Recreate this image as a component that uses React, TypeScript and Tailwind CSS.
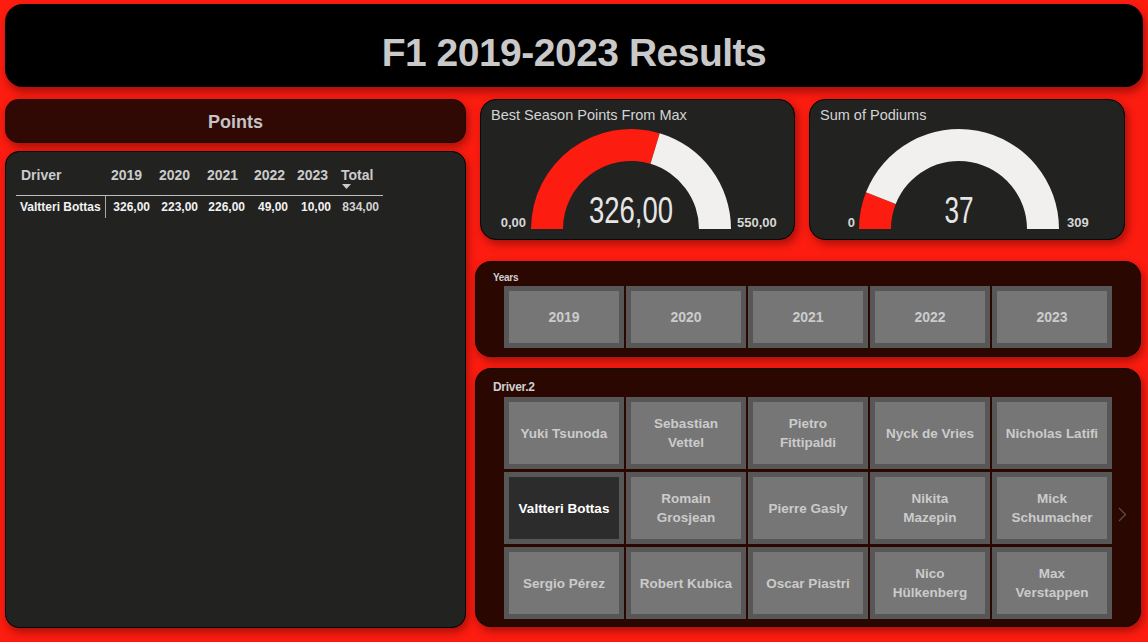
import React from "react";

const FONT = { fontFamily: '"Liberation Sans", Arial, sans-serif' };

function arcPath(cx: number, cy: number, R: number, r: number, a0: number, a1: number) {
  const p = (rad: number, ang: number) => [cx + rad * Math.cos(ang), cy - rad * Math.sin(ang)];
  const [x0, y0] = p(R, a0);
  const [x1, y1] = p(R, a1);
  const [x2, y2] = p(r, a1);
  const [x3, y3] = p(r, a0);
  return `M ${x0} ${y0} A ${R} ${R} 0 0 1 ${x1} ${y1} L ${x2} ${y2} A ${r} ${r} 0 0 0 ${x3} ${y3} Z`;
}

function Gauge({
  title,
  value,
  valueWidth,
  min,
  max,
  frac,
  cx,
  maxX,
  width,
}: {
  title: string;
  value: string;
  valueWidth: number;
  min: string;
  max: string;
  frac: number;
  cx: number;
  maxX: number;
  width: number;
}) {
  const cy = 129;
  const R = 100;
  const r = 68;
  const split = Math.PI * (1 - frac);
  return (
    <div
      className="h-[141px] rounded-[16px] bg-[#222220] border border-black shadow-[3px_4px_8px_rgba(60,0,0,0.45)] overflow-hidden"
      style={{ width }}
    >
      <svg width={width} height={141} viewBox={`0 0 ${width} 141`}>
        <text x={10} y={20} fontSize={14.5} fill="#d4d4d4" style={FONT}>
          {title}
        </text>
        <path d={arcPath(cx, cy, R, r, Math.PI, split)} fill="#fd1c10" />
        <path d={arcPath(cx, cy, R, r, split, 0)} fill="#f1f0ee" />
        <text
          x={cx}
          y={123}
          fontSize={37}
          fill="#e6e6e6"
          textAnchor="middle"
          textLength={valueWidth}
          lengthAdjust="spacingAndGlyphs"
          style={FONT}
        >
          {value}
        </text>
        <text x={45} y={127} fontSize={13} fontWeight={700} fill="#d6d6d6" textAnchor="end" style={FONT}>
          {min}
        </text>
        <text x={maxX} y={127} fontSize={13} fontWeight={700} fill="#d6d6d6" style={FONT}>
          {max}
        </text>
      </svg>
    </div>
  );
}

function Cell({ label, selected }: { label: string; selected?: boolean }) {
  return (
    <div className="w-[120px] h-[72px] bg-[#575757] p-[5px]">
      <div
        className={`w-full h-full flex items-center justify-center text-center px-1 text-[13.5px] font-bold leading-[19px] whitespace-pre-line ${
          selected ? "bg-[#2c2c2c] text-white" : "bg-[#767676] text-[#cbcbcb]"
        }`}
      >
        {label}
      </div>
    </div>
  );
}

const drivers = [
  ["Yuki Tsunoda", "Sebastian\nVettel", "Pietro\nFittipaldi", "Nyck de Vries", "Nicholas Latifi"],
  ["Valtteri Bottas", "Romain\nGrosjean", "Pierre Gasly", "Nikita\nMazepin", "Mick\nSchumacher"],
  ["Sergio Pérez", "Robert Kubica", "Oscar Piastri", "Nico\nHülkenberg", "Max\nVerstappen"],
];

const cols = [
  { h: "2019", v: "326,00", w: "w-[48px]" },
  { h: "2020", v: "223,00", w: "w-[48px]" },
  { h: "2021", v: "226,00", w: "w-[47px]" },
  { h: "2022", v: "49,00", w: "w-[43px]" },
  { h: "2023", v: "10,00", w: "w-[43px]" },
];

export default function App() {
  return (
    <div className="w-[1148px] h-[642px] bg-[#fd1c10] overflow-hidden pt-[4px] px-[5px]" style={FONT}>
      {/* Title */}
      <div className="w-[1138px] h-[83px] rounded-[18px] bg-black flex items-center justify-center pt-[14px] shadow-[2px_5px_8px_rgba(60,0,0,0.45)]">
        <div className="text-[39px] font-bold text-[#c9c9c9] tracking-[-0.5px] leading-none">F1 2019-2023 Results</div>
      </div>

      <div className="flex mt-[12px]">
        {/* Left column */}
        <div className="w-[461px] flex flex-col">
          <div className="h-[44px] rounded-[14px] bg-[#300804] border border-black/40 flex items-center justify-center pt-[2px] shadow-[2px_4px_8px_rgba(60,0,0,0.45)]">
            <span className="text-[18px] font-bold text-[#c4c4c4]">Points</span>
          </div>
          <div className="mt-[8px] h-[477px] rounded-[14px] bg-[#222221] border border-black pl-[10px] pt-[8px] shadow-[2px_4px_8px_rgba(60,0,0,0.45)]">
            <div className="w-[367px]">
              {/* header */}
              <div className="flex h-[35px] text-[14px] font-bold text-[#cbcbcb]">
                <div className="w-[90px] pl-[5px] pt-[5px]">Driver</div>
                {cols.map((c) => (
                  <div key={c.h} className={`${c.w} pl-[5px] pt-[5px]`}>
                    {c.h}
                  </div>
                ))}
                <div className="w-[48px] pl-[6px] pt-[5px] relative">
                  Total
                  <svg className="absolute left-[7px] top-[24px]" width="9" height="5" viewBox="0 0 9 5">
                    <path d="M0 0 L9 0 L4.5 5 Z" fill="#cbcbcb" />
                  </svg>
                </div>
              </div>
              <div className="h-px bg-[#bdbdbd]" />
              {/* data */}
              <div className="flex h-[22px] items-center text-[12px] font-bold text-[#f2f2f2]">
                <div className="w-[90px] pl-[4px] h-full flex items-center border-r border-[#a9a9a9]">Valtteri Bottas</div>
                {cols.map((c) => (
                  <div key={c.h} className={`${c.w} pr-[4px] text-right`}>
                    {c.v}
                  </div>
                ))}
                <div className="w-[48px] pr-[4px] text-right text-[#d2d2d2]">834,00</div>
              </div>
            </div>
          </div>
        </div>

        {/* Right column */}
        <div className="ml-[9px] w-[666px] flex flex-col">
          <div className="flex pl-[5px] gap-[14px]">
            <Gauge
              title="Best Season Points From Max"
              value="326,00"
              valueWidth={84}
              min="0,00"
              max="550,00"
              frac={326 / 550}
              cx={150}
              maxX={256}
              width={315}
            />
            <Gauge
              title="Sum of Podiums"
              value="37"
              valueWidth={29}
              min="0"
              max="309"
              frac={37 / 309}
              cx={149}
              maxX={257}
              width={316}
            />
          </div>

          {/* Years slicer */}
          <div className="mt-[21px] h-[96px] rounded-[16px] bg-[#2b0702] border border-black/60 pl-[28px] pt-[10px] shadow-[2px_4px_8px_rgba(60,0,0,0.45)]">
            <div className="text-[10px] font-bold text-[#cfcfcf] leading-[12px] -ml-[11px] tracking-[-0.3px]">Years</div>
            <div className="flex gap-[2px] mt-[2px]">
              {["2019", "2020", "2021", "2022", "2023"].map((y) => (
                <div key={y} className="w-[120px] h-[62px] bg-[#575757] p-[5px]">
                  <div className="w-full h-full bg-[#767676] flex items-center justify-center text-[14px] font-bold text-[#cbcbcb]">
                    {y}
                  </div>
                </div>
              ))}
            </div>
          </div>

          {/* Driver slicer */}
          <div className="mt-[11px] h-[259px] rounded-[16px] bg-[#2b0702] border border-black/60 pl-[28px] pt-[11px] shadow-[2px_4px_8px_rgba(60,0,0,0.45)] flex">
            <div className="flex flex-col">
              <div className="text-[12px] font-bold text-[#cfcfcf] leading-[14px] -ml-[11px] tracking-[-0.3px]">Driver.2</div>
              <div className="flex flex-col gap-[3px] mt-[3px]">
                {drivers.map((row, i) => (
                  <div key={i} className="flex gap-[2px]">
                    {row.map((d) => (
                      <Cell key={d} label={d} selected={d === "Valtteri Bottas"} />
                    ))}
                  </div>
                ))}
              </div>
            </div>
            <div className="flex items-center pl-[6px] pt-[22px]">
              <svg width="9" height="15" viewBox="0 0 9 15">
                <path d="M1 1 L7.5 7.5 L1 14" fill="none" stroke="#5e4a48" strokeWidth="1.3" />
              </svg>
            </div>
          </div>
        </div>
      </div>
    </div>
  );
}
